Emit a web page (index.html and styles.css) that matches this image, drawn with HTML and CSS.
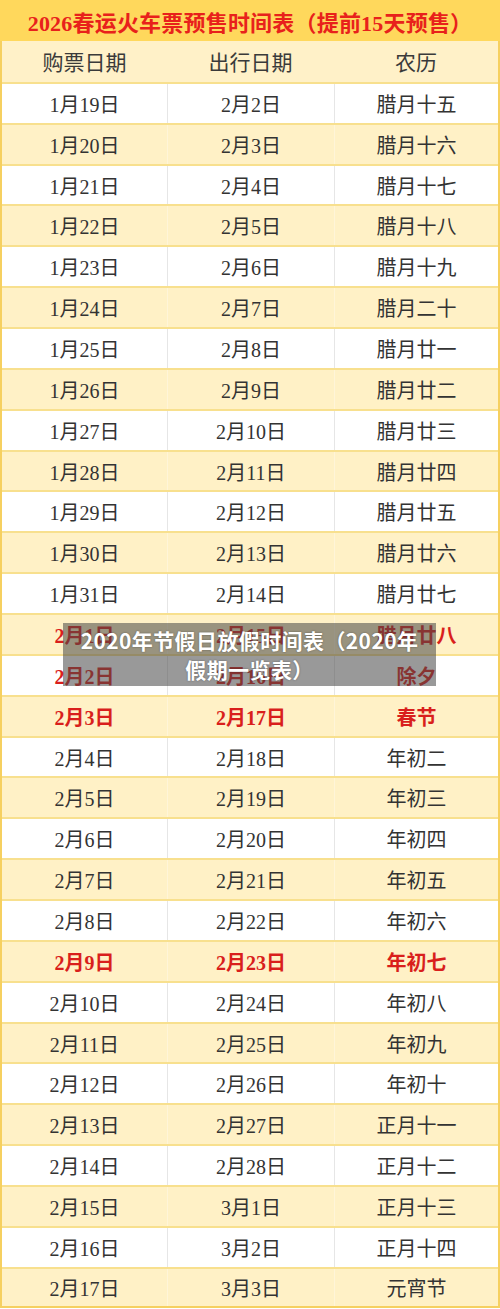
FILE: index.html
```html
<!DOCTYPE html>
<html lang="zh">
<head>
<meta charset="utf-8">
<title>2026春运火车票预售时间表</title>
<link rel="stylesheet" href="styles.css">
</head>
<body>
<div class="page">
  <div class="title">2026春运火车票预售时间表（提前15天预售）</div>
  <div class="table">
    <div class="row head"><div>购票日期</div><div>出行日期</div><div>农历</div></div>
    <div class="row w"><div>1月19日</div><div>2月2日</div><div>腊月十五</div></div>
    <div class="row y"><div>1月20日</div><div>2月3日</div><div>腊月十六</div></div>
    <div class="row w"><div>1月21日</div><div>2月4日</div><div>腊月十七</div></div>
    <div class="row y"><div>1月22日</div><div>2月5日</div><div>腊月十八</div></div>
    <div class="row w"><div>1月23日</div><div>2月6日</div><div>腊月十九</div></div>
    <div class="row y"><div>1月24日</div><div>2月7日</div><div>腊月二十</div></div>
    <div class="row w"><div>1月25日</div><div>2月8日</div><div>腊月廿一</div></div>
    <div class="row y"><div>1月26日</div><div>2月9日</div><div>腊月廿二</div></div>
    <div class="row w"><div>1月27日</div><div>2月10日</div><div>腊月廿三</div></div>
    <div class="row y"><div>1月28日</div><div>2月11日</div><div>腊月廿四</div></div>
    <div class="row w"><div>1月29日</div><div>2月12日</div><div>腊月廿五</div></div>
    <div class="row y"><div>1月30日</div><div>2月13日</div><div>腊月廿六</div></div>
    <div class="row w"><div>1月31日</div><div>2月14日</div><div>腊月廿七</div></div>
    <div class="row y red"><div>2月1日</div><div>2月15日</div><div>腊月廿八</div></div>
    <div class="row w red"><div>2月2日</div><div>2月16日</div><div>除夕</div></div>
    <div class="row y red"><div>2月3日</div><div>2月17日</div><div>春节</div></div>
    <div class="row w"><div>2月4日</div><div>2月18日</div><div>年初二</div></div>
    <div class="row y"><div>2月5日</div><div>2月19日</div><div>年初三</div></div>
    <div class="row w"><div>2月6日</div><div>2月20日</div><div>年初四</div></div>
    <div class="row y"><div>2月7日</div><div>2月21日</div><div>年初五</div></div>
    <div class="row w"><div>2月8日</div><div>2月22日</div><div>年初六</div></div>
    <div class="row y red"><div>2月9日</div><div>2月23日</div><div>年初七</div></div>
    <div class="row w"><div>2月10日</div><div>2月24日</div><div>年初八</div></div>
    <div class="row y"><div>2月11日</div><div>2月25日</div><div>年初九</div></div>
    <div class="row w"><div>2月12日</div><div>2月26日</div><div>年初十</div></div>
    <div class="row y"><div>2月13日</div><div>2月27日</div><div>正月十一</div></div>
    <div class="row w"><div>2月14日</div><div>2月28日</div><div>正月十二</div></div>
    <div class="row y"><div>2月15日</div><div>3月1日</div><div>正月十三</div></div>
    <div class="row w"><div>2月16日</div><div>3月2日</div><div>正月十四</div></div>
    <div class="row y last"><div>2月17日</div><div>3月3日</div><div>元宵节</div></div>
  </div>
  <div class="caption">2020年节假日放假时间表（2020年<br>假期一览表）</div>
</div>
</body>
</html>
```
FILE: styles.css
```css
html, body {
  margin: 0;
  padding: 0;
  background: #ffffff;
}
.page {
  position: relative;
  width: 500px;
  height: 1309px;
  overflow: hidden;
  font-family: "Liberation Serif", "Noto Sans CJK SC", serif;
}
.title {
  height: 41px;
  background: #ffd85c;
  color: #e8211b;
  font-weight: bold;
  font-size: 22px;
  letter-spacing: 0.2px;
  display: flex;
  align-items: center;
  justify-content: center;
}
.table {
  border-left: 2px solid #f6d060;
  border-right: 2px solid #f6d060;
  border-bottom: 2px solid #f6d060;
}
.row {
  display: grid;
  grid-template-columns: 165px 167px 1fr;
  height: 40.87px;
  box-sizing: border-box;
  border-top: 2px solid #f8e08e;
  font-size: 20px;
  color: #333333;
}
.row > div {
  display: flex;
  align-items: center;
  justify-content: center;
}
.row.head {
  border-top: none;
  background: #fff1c8;
  font-size: 21px;
  color: #3a3a3a;
}
.row.y {
  background: #fff1c6;
}
.row.w {
  background: #ffffff;
}
.row.w > div + div {
  border-left: 1px solid #e6e6e6;
}
.row.y > div + div {
  border-left: 1px solid #fff5d8;
}
.row.last {
  height: 39px;
}
.row.red {
  color: #d91f1c;
  font-weight: bold;
}
.caption {
  position: absolute;
  left: 63px;
  top: 623px;
  width: 373px;
  height: 63px;
  box-sizing: border-box;
  padding: 3px 4px 0;
  background: rgba(70, 70, 70, 0.55);
  color: #ffffff;
  font-family: "Noto Sans CJK SC", sans-serif;
  font-weight: bold;
  font-size: 21px;
  letter-spacing: 0.4px;
  line-height: 29px;
  text-align: center;
  text-shadow: 0 0 2px rgba(0, 0, 0, 0.4);
}
```
